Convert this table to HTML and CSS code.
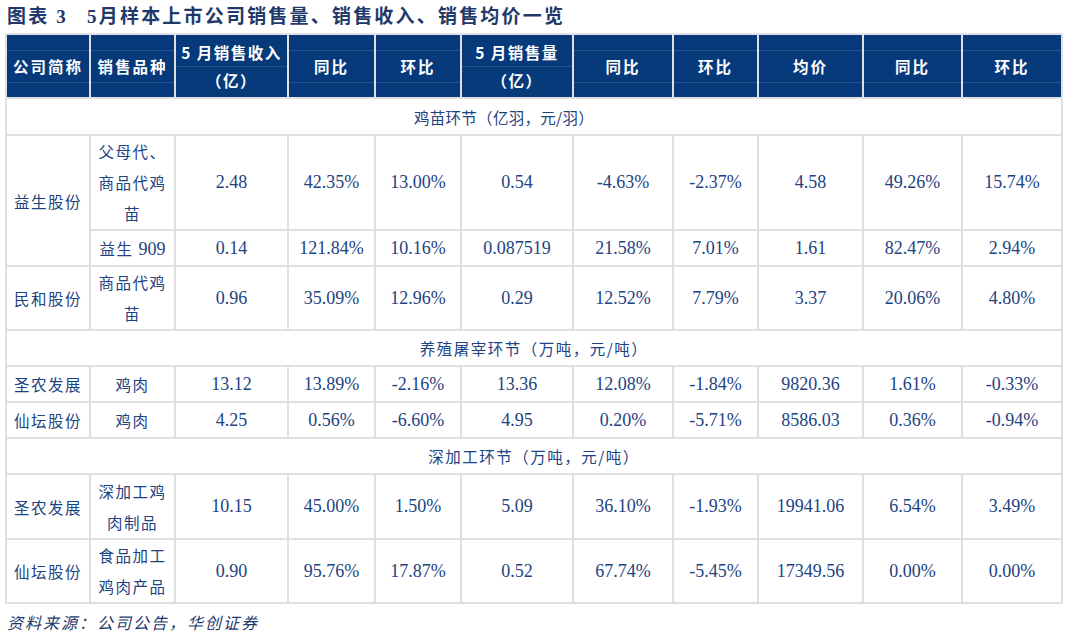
FILE: index.html
```html
<!DOCTYPE html>
<html lang="zh-CN">
<head>
<meta charset="utf-8">
<title>5月样本上市公司销售量、销售收入、销售均价一览</title>
<link rel="stylesheet" href="styles.css">
</head>
<body>
<div class="page">
  <h1 class="title"><span class="t-label">图表 3</span><span class="t-text">5月样本上市公司销售量、销售收入、销售均价一览</span></h1>
  <table class="data">
    <colgroup>
      <col class="c1"><col class="c2"><col class="c3"><col class="c4"><col class="c5"><col class="c6">
      <col class="c7"><col class="c8"><col class="c9"><col class="c10"><col class="c11">
    </colgroup>
    <thead>
      <tr class="r-head">
        <th class="h1">公司简称</th>
        <th class="h1">销售品种</th>
        <th class="h2">5 月销售收入<br>（亿）</th>
        <th class="h1">同比</th>
        <th class="h1">环比</th>
        <th class="h2">5 月销售量<br>（亿）</th>
        <th class="h1">同比</th>
        <th class="h1">环比</th>
        <th class="h1">均价</th>
        <th class="h1">同比</th>
        <th class="h1">环比</th>
      </tr>
    </thead>
    <tbody>
      <tr class="r-sec1"><td class="sec s1" colspan="11">鸡苗环节（亿羽，元/羽）</td></tr>
      <tr class="r-95">
        <td class="cn" rowspan="2">益生股份</td>
        <td class="cn ml">父母代、<br>商品代鸡<br>苗</td>
        <td>2.48</td><td>42.35%</td><td>13.00%</td><td>0.54</td><td>-4.63%</td><td>-2.37%</td><td>4.58</td><td>49.26%</td><td>15.74%</td>
      </tr>
      <tr class="r-36">
        <td class="cn">益生 <span class="num">909</span></td>
        <td>0.14</td><td>121.84%</td><td>10.16%</td><td>0.087519</td><td>21.58%</td><td>7.01%</td><td>1.61</td><td>82.47%</td><td>2.94%</td>
      </tr>
      <tr class="r-63">
        <td class="cn">民和股份</td>
        <td class="cn ml">商品代鸡<br>苗</td>
        <td>0.96</td><td>35.09%</td><td>12.96%</td><td>0.29</td><td>12.52%</td><td>7.79%</td><td>3.37</td><td>20.06%</td><td>4.80%</td>
      </tr>
      <tr class="r-36"><td class="sec" colspan="11">养殖屠宰环节（万吨，元/吨）</td></tr>
      <tr class="r-36">
        <td class="cn">圣农发展</td>
        <td class="cn">鸡肉</td>
        <td>13.12</td><td>13.89%</td><td>-2.16%</td><td>13.36</td><td>12.08%</td><td>-1.84%</td><td>9820.36</td><td>1.61%</td><td>-0.33%</td>
      </tr>
      <tr class="r-36">
        <td class="cn">仙坛股份</td>
        <td class="cn">鸡肉</td>
        <td>4.25</td><td>0.56%</td><td>-6.60%</td><td>4.95</td><td>0.20%</td><td>-5.71%</td><td>8586.03</td><td>0.36%</td><td>-0.94%</td>
      </tr>
      <tr class="r-36"><td class="sec" colspan="11">深加工环节（万吨，元/吨）</td></tr>
      <tr class="r-65">
        <td class="cn">圣农发展</td>
        <td class="cn ml">深加工鸡<br>肉制品</td>
        <td>10.15</td><td>45.00%</td><td>1.50%</td><td>5.09</td><td>36.10%</td><td>-1.93%</td><td>19941.06</td><td>6.54%</td><td>3.49%</td>
      </tr>
      <tr class="r-64">
        <td class="cn">仙坛股份</td>
        <td class="cn ml">食品加工<br>鸡肉产品</td>
        <td>0.90</td><td>95.76%</td><td>17.87%</td><td>0.52</td><td>67.74%</td><td>-5.45%</td><td>17349.56</td><td>0.00%</td><td>0.00%</td>
      </tr>
    </tbody>
  </table>
  <p class="source">资料来源：公司公告，华创证券</p>
</div>
</body>
</html>
```

FILE: styles.css
```css
html, body {
  margin: 0;
  padding: 0;
  background: #ffffff;
}

.page {
  padding: 0 0 0 5px;
  font-family: "Liberation Serif", "Noto Sans CJK SC", serif;
  color: #1d4381;
}

.title {
  margin: 0;
  height: 33px;
  line-height: 33px;
  font-size: 19px;
  font-weight: bold;
  color: #1f3a6a;
  letter-spacing: 2.2px;
  white-space: nowrap;
}

.t-label {
  margin-left: 2px;
  margin-right: 19px;
}

.data {
  border-collapse: collapse;
  table-layout: fixed;
  width: 1058px;
}

.c1 { width: 84px; }
.c2 { width: 85px; }
.c3 { width: 113px; }
.c4 { width: 87px; }
.c5 { width: 86px; }
.c6 { width: 112px; }
.c7 { width: 100px; }
.c8 { width: 85px; }
.c9 { width: 105px; }
.c10 { width: 99px; }
.c11 { width: 100px; }

.data th,
.data td {
  border: 2px solid #e0e0e0;
  padding: 0;
  text-align: center;
  vertical-align: middle;
  overflow: hidden;
}

.data th {
  background-color: #063a7a;
  color: #ffffff;
  font-family: "Noto Sans CJK SC", sans-serif;
  font-size: 15.5px;
  font-weight: bold;
  letter-spacing: 2px;
  line-height: 28px;
}

.data th.h1 {
  background-image:
    linear-gradient(to bottom,
      transparent 15px, #28508e 15px, #28508e 16px, transparent 16px,
      transparent 47px, #28508e 47px, #28508e 48px, transparent 48px);
}

.data th.h2 {
  background-image:
    linear-gradient(to bottom,
      transparent 31px, #28508e 31px, #28508e 32px, transparent 32px);
  letter-spacing: 1.5px;
}

.r-head { height: 64px; }
.r-sec1 { height: 37px; }
.r-95 { height: 95px; }
.r-36 { height: 36px; }
.r-63 { height: 63px; }
.r-65 { height: 65px; }
.r-64 { height: 64px; }

.data td {
  font-size: 18px;
  color: #1d4381;
}

.data td.cn {
  font-family: "Noto Sans CJK SC", sans-serif;
  font-size: 15.5px;
  letter-spacing: 1.5px;
}

.data td.ml {
  line-height: 31px;
}

.data td .num {
  font-family: "Liberation Serif", serif;
  font-size: 18px;
  letter-spacing: 0;
}

.data td.sec {
  font-family: "Noto Sans CJK SC", sans-serif;
  font-size: 15.5px;
  letter-spacing: 1.5px;
}

.data td.s1 {
  padding-right: 60px;
  letter-spacing: 0.3px;
}

.source {
  margin: 6px 0 0 2px;
  font-family: "Noto Sans CJK SC", sans-serif;
  font-size: 16px;
  font-style: italic;
  letter-spacing: 2px;
  color: #1f3a6a;
  line-height: 24px;
}
```
